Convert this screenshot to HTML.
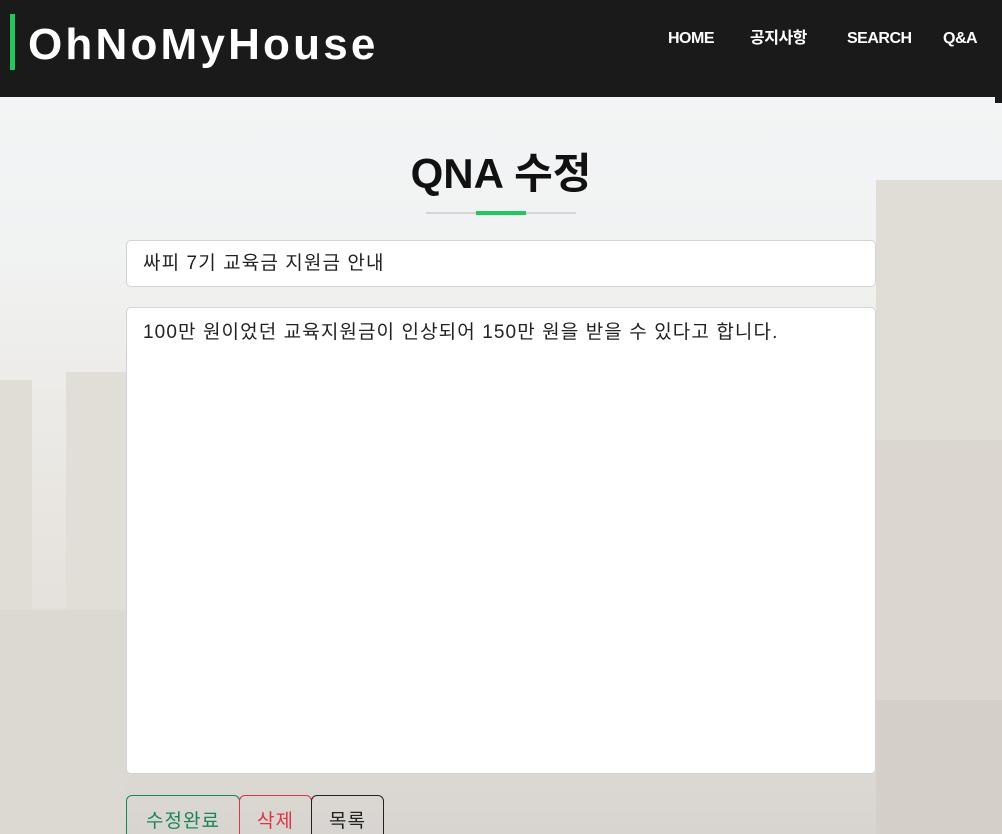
<!DOCTYPE html>
<html style="overflow:hidden;background:#d8d4cf"><head><meta charset="utf-8"><style>
*{box-sizing:border-box;margin:0;padding:0}
body{width:1002px;height:834px;overflow:hidden;position:relative;font-family:"Liberation Sans","Noto Sans CJK KR",sans-serif;
background:linear-gradient(180deg,#f3f5f7 0%,#f1f2f2 30%,#e9e6e1 60%,#e2ded8 80%,#d8d4cf 100%);}
.hdr{position:absolute;left:0;top:0;width:1002px;height:97px;background:#1a1a1a}
.strip{position:absolute;left:995px;top:97px;width:7px;height:6px;background:#1a1a1a}
.bar{position:absolute;left:10px;top:14px;width:5px;height:56px;background:#22c55e}
.logo{position:absolute;left:28px;top:17px;color:#fff;font-size:44px;font-weight:bold;letter-spacing:3.2px;line-height:56px}
.nav{position:absolute;top:29px;color:#fff;font-size:16px;font-weight:bold;line-height:20px;letter-spacing:-0.5px}
.bld{position:absolute}
h1{position:absolute;left:0;width:1002px;top:147px;text-align:center;font-size:42px;font-weight:bold;color:#111;line-height:54px}
.ul{position:absolute;left:426px;top:212px;width:150px;height:2px;background:#d6d6d6}
.ug{position:absolute;left:476px;top:211px;width:50px;height:4px;background:#22c55e}
.box{position:absolute;left:126px;width:750px;background:#fff;border:1px solid #ced4da;border-radius:5px;font-size:19px;letter-spacing:1.1px;color:#222;padding-left:16px;white-space:nowrap}
.btn{position:absolute;top:795px;height:60px;border:1px solid;border-radius:6px;font-size:19px;padding:10px 0 0 0;text-align:center;letter-spacing:1px}
</style></head><body>
<div class="bld" style="left:0;top:380px;width:32px;height:454px;background:#e0dcd6"></div>
<div class="bld" style="left:66px;top:372px;width:60px;height:462px;background:#e1ddd7"></div>
<div class="bld" style="left:0;top:610px;width:126px;height:224px;background:#dcd8d2"></div>
<div class="bld" style="left:876px;top:180px;width:126px;height:654px;background:#e0dcd6"></div>
<div class="bld" style="left:876px;top:440px;width:126px;height:394px;background:#dbd6cf"></div>
<div class="bld" style="left:876px;top:700px;width:126px;height:134px;background:#d4cfc9"></div>
<div class="hdr"></div><div class="strip"></div>
<div class="bar"></div>
<div class="logo">OhNoMyHouse</div>
<div class="nav" style="left:668px">HOME</div>
<div class="nav" style="left:750px">공지사항</div>
<div class="nav" style="left:847px">SEARCH</div>
<div class="nav" style="left:943px">Q&amp;A</div>
<h1>QNA 수정</h1>
<div class="ul"></div><div class="ug"></div>
<div class="box" style="top:240px;height:47px;line-height:45px">싸피 7기 교육금 지원금 안내</div>
<div class="box" style="top:307px;height:467px;padding-top:12px;line-height:26px">100만 원이었던 교육지원금이 인상되어 150만 원을 받을 수 있다고 합니다.</div>
<div class="btn" style="left:126px;width:114px;border-color:#198754;color:#198754">수정완료</div>
<div class="btn" style="left:239px;width:73px;border-color:#dc3545;color:#dc3545">삭제</div>
<div class="btn" style="left:311px;width:73px;border-color:#222;color:#222">목록</div>
</body></html>
